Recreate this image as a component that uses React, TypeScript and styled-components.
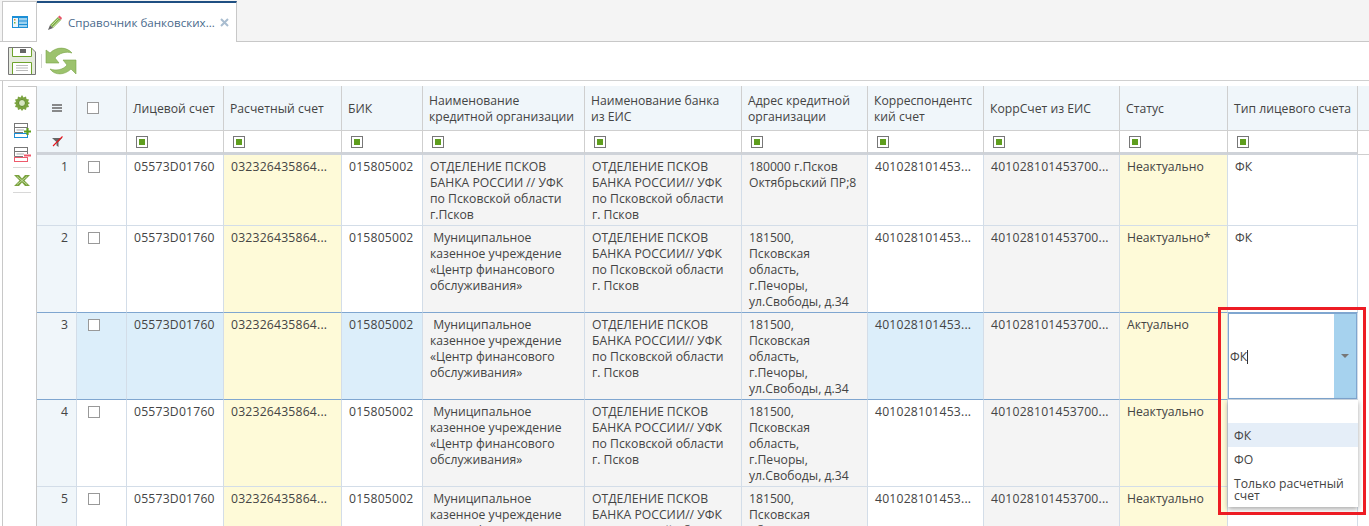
import styled, { createGlobalStyle } from "styled-components";

const GlobalStyle = createGlobalStyle`
  html, body {
    margin: 0;
    padding: 0;
    background: #fff;
  }
`;

type Tone = "plain" | "yellow" | "gray";

const columns: { title: string; width: number; tone: Tone; numeric?: boolean }[] = [
  { title: "Лицевой счет", width: 97, tone: "plain", numeric: true },
  { title: "Расчетный счет", width: 118, tone: "yellow", numeric: true },
  { title: "БИК", width: 81, tone: "plain", numeric: true },
  { title: "Наименование\nкредитной организации", width: 162, tone: "gray" },
  { title: "Наименование банка\nиз ЕИС", width: 157, tone: "gray" },
  { title: "Адрес кредитной\nорганизации", width: 126, tone: "gray" },
  { title: "Корреспондентс\nкий счет", width: 116, tone: "plain", numeric: true },
  { title: "КоррСчет из ЕИС", width: 136, tone: "gray", numeric: true },
  { title: "Статус", width: 108, tone: "yellow" },
  { title: "Тип лицевого счета", width: 130, tone: "plain" },
];

const account = "05573D01760";
const settlement = "032326435864...";
const bik = "015805002";
const corr = "401028101453...";
const corrEis = "401028101453700...";
const municipal = "\u00A0Муниципальное\nказенное учреждение\n«Центр финансового\nобслуживания»";
const bankEis = "ОТДЕЛЕНИЕ ПСКОВ\nБАНКА РОССИИ// УФК\nпо Псковской области\nг. Псков";
const pechory = "181500,\nПсковская\nобласть,\nг.Печоры,\nул.Свободы, д.34";

const rows = [
  {
    name: "ОТДЕЛЕНИЕ ПСКОВ\nБАНКА РОССИИ // УФК\nпо Псковской области\nг.Псков",
    address: "180000 г.Псков\nОктябрьский ПР;8",
    status: "Неактуально",
    type: "ФК",
  },
  { name: municipal, address: pechory, status: "Неактуально*", type: "ФК" },
  { name: municipal, address: pechory, status: "Актуально", type: "ФК" },
  { name: municipal, address: pechory, status: "Неактуально", type: "" },
  { name: municipal, address: pechory, status: "Неактуально", type: "" },
];

const Page = styled.div`
  height: 526px;
  overflow: hidden;
  font-family: "Open Sans", "Liberation Sans", sans-serif;
  font-size: 12.2px;
  line-height: 16px;
  color: #444;
`;

const TabBar = styled.div`
  display: flex;
  height: 41px;
  padding-left: 2px;
  background: #f4f4f4;
  border-bottom: 1px solid #c8c8c8;
`;

const HomeTab = styled.div`
  display: flex;
  align-items: center;
  justify-content: center;
  width: 35px;
  height: 40px;
  margin-top: 1px;
  padding-top: 2px;
  box-sizing: border-box;
  background: #fff;
  border-top: 1px solid #c8c8c8;
  border-left: 1px solid #c8c8c8;
  border-right: 1px solid #c8c8c8;
`;

const ActiveTab = styled.div`
  display: flex;
  align-items: center;
  width: 200px;
  height: 41px;
  margin-top: 1px;
  padding: 0 0 0 10px;
  box-sizing: border-box;
  background: #fff;
  border-top: 2px solid #1f4f82;
  border-right: 1px solid #c8c8c8;
  color: #4a6a8c;
`;

const TabTitle = styled.span`
  margin-left: 6px;
  width: 152px;
  font-size: 11.6px;
  white-space: nowrap;
`;

const Toolbar = styled.div`
  display: flex;
  align-items: center;
  height: 38px;
  padding-left: 8px;
  border-bottom: 1px solid #d0d0d0;
`;

const ToolSeparator = styled.div`
  width: 1px;
  height: 14px;
  margin: 0 3px 0 5px;
  background: #d4d4d4;
`;

const Main = styled.div`
  display: flex;
`;

const SideBar = styled.div`
  display: flex;
  flex-shrink: 0;
  width: 35px;
  height: 445px;
  margin-left: 2px;
  padding: 5px 0 0 5px;
  box-sizing: border-box;
  border-left: 1px solid #c8c8c8;
`;

const SideInner = styled.div`
  display: flex;
  flex-direction: column;
  align-items: center;
  width: 29px;
  box-sizing: border-box;
  padding-top: 8px;
  border-top: 1px solid #c8c8c8;
  border-right: 1px solid #c8c8c8;
`;

const SideIcon = styled.div<{ $gap: number }>`
  display: flex;
  justify-content: center;
  margin-bottom: ${({ $gap }) => $gap}px;
`;

const SideRule = styled.div`
  flex-shrink: 0;
  width: 18px;
  height: 1px;
  margin-bottom: 7px;
  background: #d8d8d8;
`;

const TableWrap = styled.div`
  padding-top: 5px;
`;

const Table = styled.table`
  table-layout: fixed;
  width: 1332px;
  border-collapse: separate;
  border-spacing: 0;
`;

const HeadCell = styled.th`
  height: 42px;
  padding: 2px 0 0 6px;
  box-sizing: content-box;
  background: #f0f6fa;
  border-right: 1px solid #cfcfcf;
  border-bottom: 1px solid #cfcfcf;
  font-weight: 400;
  text-align: left;
  vertical-align: middle;
  white-space: pre-line;
`;

const MenuHead = styled(HeadCell)`
  padding: 0 0 0 15px;
  height: 44px;
`;

const CheckHead = styled(HeadCell)`
  padding: 0 0 0 10px;
  height: 44px;
`;

const Filler = styled.th`
  background: #f0f6fa;
  border-bottom: 1px solid #cfcfcf;
`;

const FilterCell = styled.td<{ $muted?: boolean }>`
  height: 21px;
  padding: 0 0 0 9px;
  background: ${({ $muted }) => ($muted ? "#f0f6fa" : "#fff")};
  border-right: 1px solid #cfcfcf;
  border-bottom: 3px solid #cfd3d9;
  vertical-align: middle;
`;

const FilterNumber = styled(FilterCell)`
  padding-left: 15px;
`;

const FillerFilter = styled.td`
  border-bottom: 1px solid #cfcfcf;
`;

const FilterMark = styled.span`
  display: block;
  width: 6px;
  height: 6px;
  border: 1px solid #777;
  padding: 2px;
  background: #5f9e1e content-box;
`;

const TONES: Record<Tone, string> = {
  plain: "#fff",
  yellow: "#fefad8",
  gray: "#f4f4f4",
};

const RowCell = styled.td<{
  $tone: Tone;
  $active: boolean;
  $before: boolean;
  $numeric?: boolean;
}>`
  padding: 4px 0 2px 7px;
  background: ${({ $tone, $active }) =>
    $active && $tone === "plain" ? "#dceefa" : TONES[$tone]};
  border-right: 1px solid #d3dde8;
  border-bottom: 1px solid
    ${({ $active, $before }) => ($active || $before ? "#7fa6d0" : "#d3dde8")};
  letter-spacing: ${({ $numeric }) => ($numeric ? "0.2px" : "normal")};
  vertical-align: top;
  white-space: pre-line;
`;

const NumberCell = styled(RowCell)`
  padding-right: 8px;
  background: #f0f6fa;
  text-align: right;
`;

const CheckCell = styled(RowCell)`
  padding: 6px 0 0 11px;
`;

const Check = styled.span`
  display: block;
  width: 10px;
  height: 10px;
  background: #fff;
  border: 1px solid #999;
`;

const EditorCell = styled(RowCell)`
  position: relative;
  padding: 0;
`;

const Editor = styled.div`
  display: flex;
  align-items: stretch;
  height: 86px;
  box-sizing: border-box;
  background: #fff;
  border: 1px solid #7fa6d0;
`;

const EditorValue = styled.div`
  display: flex;
  align-items: center;
  flex: 1;
  padding: 2px 0 0 1px;
`;

const Caret = styled.span`
  display: inline-block;
  width: 1px;
  height: 14px;
  background: #333;
`;

const EditorArrow = styled.div`
  display: flex;
  align-items: center;
  justify-content: center;
  width: 22px;
  background: #a6d2ee;

  &::after {
    content: "";
    border-left: 4px solid transparent;
    border-right: 4px solid transparent;
    border-top: 4px solid #777;
  }
`;

const Dropdown = styled.div`
  position: absolute;
  z-index: 3;
  top: 87px;
  left: 0;
  width: 130px;
  height: 107px;
  padding-top: 23px;
  box-sizing: border-box;
  background: #fff;
  box-shadow: 0 2px 5px rgba(0, 0, 0, 0.35);
`;

const Option = styled.div<{ $current?: boolean; $wrapped?: boolean }>`
  height: ${({ $wrapped }) => ($wrapped ? 36 : 24)}px;
  padding: ${({ $wrapped }) => ($wrapped ? "7px 6px 0" : "5px 6px 3px")};
  box-sizing: border-box;
  background: ${({ $current }) => ($current ? "#e5eef8" : "#fff")};
  line-height: ${({ $wrapped }) => ($wrapped ? 12 : 16)}px;
`;

const Highlight = styled.div`
  position: absolute;
  z-index: 4;
  top: -6px;
  left: -10px;
  width: 142px;
  height: 202px;
  border: 3px solid #ed1c24;
  pointer-events: none;
`;

function HomeIcon() {
  return (
    <svg width="16" height="13" viewBox="0 0 16 13">
      <rect width="16" height="12" fill="#1c8fd6" />
      <rect x="1" y="2" width="5" height="9" fill="#eef7fc" />
      <rect x="7" y="2" width="8" height="2.5" fill="#9fd2ef" />
      <rect x="7" y="5.5" width="8" height="2.5" fill="#9fd2ef" />
      <rect x="7" y="9" width="8" height="2" fill="#9fd2ef" />
      <rect x="2" y="3" width="1.5" height="1.5" fill="#e58a2e" />
      <rect x="2" y="6" width="1.5" height="1.5" fill="#7cb342" />
    </svg>
  );
}

function PencilIcon() {
  return (
    <svg width="15" height="16" viewBox="0 0 15 16">
      <path d="M3 10 L11 2 L14 5 L6 13 Z" fill="#7fae45" />
      <path d="M4.5 10.5 L11.5 3.5 M6 12 L12.5 5" stroke="#d6e8c0" strokeWidth="0.8" />
      <path d="M11 2 L12.5 0.5 L15 3 L14 5 Z" fill="#e8556a" />
      <path d="M3 10 L6 13 L1 15 Z" fill="#666" />
    </svg>
  );
}

function CloseIcon() {
  return (
    <svg width="9" height="9" viewBox="0 0 9 9">
      <path d="M1 1 L8 8 M8 1 L1 8" stroke="#a9bdd0" strokeWidth="2" />
    </svg>
  );
}

function SaveIcon() {
  return (
    <svg width="28" height="28" viewBox="0 0 28 28">
      <path d="M0.5 0.5 H23 L27.5 5 V27.5 H0.5 Z" fill="#e6ebdf" stroke="#777" />
      <path d="M4.5 1 V9.5 H23.5 V1" fill="#fff" stroke="#6ea32c" />
      <rect x="12" y="2" width="6" height="4" fill="#666" />
      <path d="M4.5 27 V15.5 H23.5 V27" fill="#fff" stroke="#6ea32c" />
      <path d="M8 18.5 H20 M8 21 H20 M8 23.5 H20" stroke="#bbb" />
    </svg>
  );
}

function RefreshIcon() {
  return (
    <svg width="32" height="28" viewBox="0 0 32 28">
      <path
        d="M1 3 L1 16 L14 16 L10 11 C14 6 21 4 27 6 C22 0 12 -1 5 6 Z"
        fill="#9cc26d"
        stroke="#7aa548"
        strokeWidth="0.6"
      />
      <path
        d="M31 13 L31 27 L26 22 C20 28 10 29 5 22 C11 24 18 23 22 18 L18 13 Z"
        fill="#9cc26d"
        stroke="#7aa548"
        strokeWidth="0.6"
      />
    </svg>
  );
}

function GearIcon() {
  return (
    <svg width="16" height="16" viewBox="0 0 16 16">
      <path
        d="M8 0 L9.5 2.5 L12 1.5 L12.5 4 L15 4.5 L14 7 L16 8 L14 9.5 L15 12 L12.5 12.5 L12 15 L9.5 14 L8 16 L6.5 14 L4 15 L3.5 12.5 L1 12 L2 9.5 L0 8 L2 7 L1 4.5 L3.5 4 L4 1.5 L6.5 2.5 Z"
        fill="#7ba33f"
      />
      <circle cx="8" cy="8" r="3.5" fill="#d7e6c2" stroke="#5f8a2a" />
    </svg>
  );
}

function AddRowIcon() {
  return (
    <svg width="17" height="15" viewBox="0 0 17 15">
      <rect x="0.5" y="0.5" width="13" height="4" fill="#fff" stroke="#777" />
      <path d="M0.5 5 V9.5 H9 M13.5 5 V6" fill="none" stroke="#777" />
      <path d="M2.5 7 H10" stroke="#aaa" />
      <rect x="0.5" y="10.5" width="13" height="4" fill="#fff" stroke="#1c8fd6" />
      <path d="M10 8.5 H17 M13.5 5 V12" stroke="#5f9e1e" strokeWidth="2.2" />
    </svg>
  );
}

function RemoveRowIcon() {
  return (
    <svg width="17" height="15" viewBox="0 0 17 15">
      <rect x="0.5" y="0.5" width="13" height="4" fill="#fff" stroke="#777" />
      <path d="M0.5 5 V9.5 H9 M13.5 5 V7" fill="none" stroke="#777" />
      <path d="M2.5 7 H10" stroke="#aaa" />
      <rect x="0.5" y="10.5" width="13" height="4" fill="#fff" stroke="#ee5a6c" />
      <path d="M10 8.5 H17" stroke="#ee5a6c" strokeWidth="2" />
    </svg>
  );
}

function ExcelIcon() {
  return (
    <svg width="16" height="11" viewBox="0 0 16 11">
      <path
        d="M0 0 H5 L8 3.5 L11 0 H16 L10.5 5.5 L16 11 H11 L8 7.5 L5 11 H0 L5.5 5.5 Z"
        fill="#7ba33f"
      />
      <path d="M3 1.5 L13 9.5 M13 1.5 L3 9.5" stroke="#c9dfae" strokeWidth="0.8" />
    </svg>
  );
}

function MenuIcon() {
  return (
    <svg width="10" height="8" viewBox="0 0 10 8" style={{ display: "block" }}>
      <path d="M0 1 H10 M0 4 H10 M0 7 H10" stroke="#666" strokeWidth="1.6" />
    </svg>
  );
}

function FilterOffIcon() {
  return (
    <svg width="11" height="11" viewBox="0 0 11 11" style={{ display: "block" }}>
      <path d="M0 2 H10 L6.5 6 V11 L4.5 9.5 V6 Z" fill="#666" />
      <path d="M1 10 L10.5 0.5" stroke="#e8141c" strokeWidth="1.1" />
    </svg>
  );
}

export default function App() {
  return (
    <Page>
      <GlobalStyle />
      <TabBar>
        <HomeTab>
          <HomeIcon />
        </HomeTab>
        <ActiveTab>
          <PencilIcon />
          <TabTitle>Справочник банковских...</TabTitle>
          <CloseIcon />
        </ActiveTab>
      </TabBar>
      <Toolbar>
        <SaveIcon />
        <ToolSeparator />
        <RefreshIcon />
      </Toolbar>
      <Main>
        <SideBar>
          <SideInner>
            <SideIcon $gap={12}>
              <GearIcon />
            </SideIcon>
            <SideIcon $gap={9}>
              <AddRowIcon />
            </SideIcon>
            <SideIcon $gap={5}>
              <RemoveRowIcon />
            </SideIcon>
            <SideRule />
            <SideIcon $gap={6}>
              <ExcelIcon />
            </SideIcon>
            <SideRule />
          </SideInner>
        </SideBar>
        <TableWrap>
          <Table>
            <colgroup>
              <col width={40} />
              <col width={50} />
              {columns.map((c) => (
                <col key={c.title} width={c.width} />
              ))}
              <col width={11} />
            </colgroup>
            <thead>
              <tr>
                <MenuHead>
                  <MenuIcon />
                </MenuHead>
                <CheckHead>
                  <Check />
                </CheckHead>
                {columns.map((c) => (
                  <HeadCell key={c.title}>{c.title}</HeadCell>
                ))}
                <Filler />
              </tr>
              <tr>
                <FilterNumber $muted>
                  <FilterOffIcon />
                </FilterNumber>
                <FilterCell />
                {columns.map((c) => (
                  <FilterCell key={c.title}>
                    <FilterMark />
                  </FilterCell>
                ))}
                <FillerFilter />
              </tr>
            </thead>
            <tbody>
              {rows.map((row, i) => {
                const active = i === 2;
                const flags = { $active: active, $before: i === 1 };
                const values = [
                  account,
                  settlement,
                  bik,
                  row.name,
                  bankEis,
                  row.address,
                  corr,
                  corrEis,
                  row.status,
                ];
                return (
                  <tr key={i}>
                    <NumberCell $tone="plain" {...flags}>
                      {i + 1}
                    </NumberCell>
                    <CheckCell $tone="plain" {...flags}>
                      <Check />
                    </CheckCell>
                    {values.map((v, j) => (
                      <RowCell
                        key={j}
                        $tone={columns[j].tone}
                        $numeric={columns[j].numeric}
                        {...flags}
                      >
                        {v}
                      </RowCell>
                    ))}
                    {active ? (
                      <EditorCell $tone="plain" $active={false} $before={false}>
                        <Editor>
                          <EditorValue>
                            {row.type}
                            <Caret />
                          </EditorValue>
                          <EditorArrow />
                        </Editor>
                        <Dropdown>
                          <Option $current>ФК</Option>
                          <Option>ФО</Option>
                          <Option $wrapped>{"Только расчетный\nсчет"}</Option>
                        </Dropdown>
                        <Highlight />
                      </EditorCell>
                    ) : (
                      <RowCell $tone="plain" {...flags}>
                        {row.type}
                      </RowCell>
                    )}
                    <td />
                  </tr>
                );
              })}
            </tbody>
          </Table>
        </TableWrap>
      </Main>
    </Page>
  );
}
